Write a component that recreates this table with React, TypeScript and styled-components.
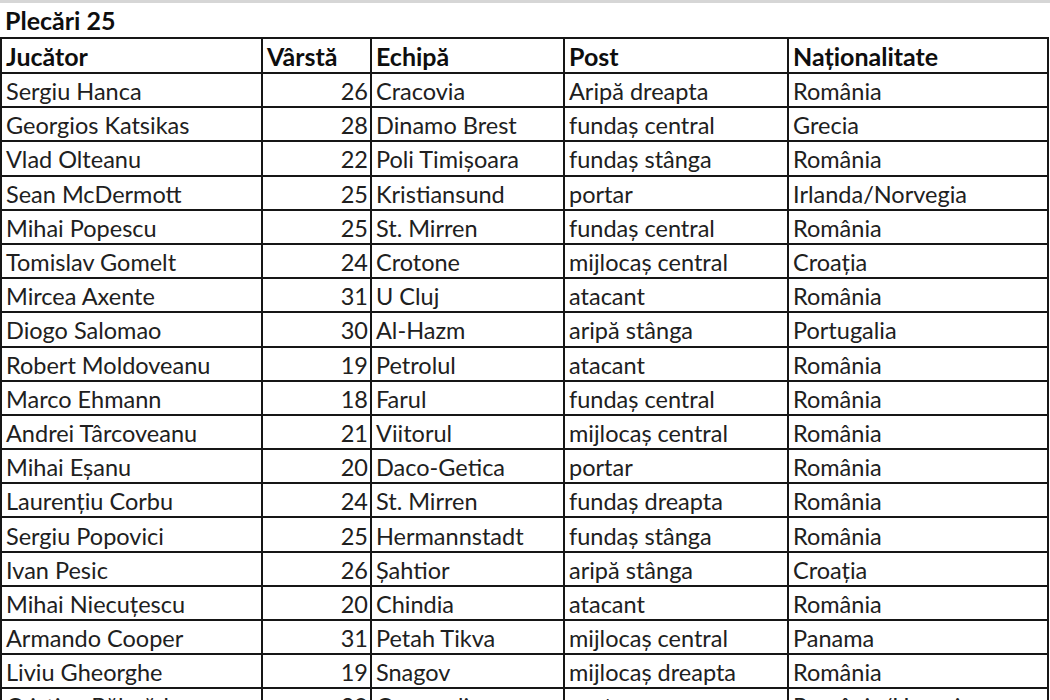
import React from 'react';
import styled, { createGlobalStyle } from 'styled-components';

type Player = {
  name: string;
  age: number | '';
  team: string;
  post: string;
  nation: string;
};

const players: Player[] = [
  { name: 'Sergiu Hanca', age: 26, team: 'Cracovia', post: 'Aripă dreapta', nation: 'România' },
  { name: 'Georgios Katsikas', age: 28, team: 'Dinamo Brest', post: 'fundaș central', nation: 'Grecia' },
  { name: 'Vlad Olteanu', age: 22, team: 'Poli Timișoara', post: 'fundaș stânga', nation: 'România' },
  { name: 'Sean McDermott', age: 25, team: 'Kristiansund', post: 'portar', nation: 'Irlanda/Norvegia' },
  { name: 'Mihai Popescu', age: 25, team: 'St. Mirren', post: 'fundaș central', nation: 'România' },
  { name: 'Tomislav Gomelt', age: 24, team: 'Crotone', post: 'mijlocaș central', nation: 'Croația' },
  { name: 'Mircea Axente', age: 31, team: 'U Cluj', post: 'atacant', nation: 'România' },
  { name: 'Diogo Salomao', age: 30, team: 'Al-Hazm', post: 'aripă stânga', nation: 'Portugalia' },
  { name: 'Robert Moldoveanu', age: 19, team: 'Petrolul', post: 'atacant', nation: 'România' },
  { name: 'Marco Ehmann', age: 18, team: 'Farul', post: 'fundaș central', nation: 'România' },
  { name: 'Andrei Târcoveanu', age: 21, team: 'Viitorul', post: 'mijlocaș central', nation: 'România' },
  { name: 'Mihai Eșanu', age: 20, team: 'Daco-Getica', post: 'portar', nation: 'România' },
  { name: 'Laurențiu Corbu', age: 24, team: 'St. Mirren', post: 'fundaș dreapta', nation: 'România' },
  { name: 'Sergiu Popovici', age: 25, team: 'Hermannstadt', post: 'fundaș stânga', nation: 'România' },
  { name: 'Ivan Pesic', age: 26, team: 'Șahtior', post: 'aripă stânga', nation: 'Croația' },
  { name: 'Mihai Niecuțescu', age: 20, team: 'Chindia', post: 'atacant', nation: 'România' },
  { name: 'Armando Cooper', age: 31, team: 'Petah Tikva', post: 'mijlocaș central', nation: 'Panama' },
  { name: 'Liviu Gheorghe', age: 19, team: 'Snagov', post: 'mijlocaș dreapta', nation: 'România' },
  { name: 'Cristian Bălgrădean', age: 29, team: 'Concordia', post: 'portar', nation: 'România/Ungaria' },
];

const GlobalStyle = createGlobalStyle`
  html, body {
    margin: 0;
    padding: 0;
    background: #ffffff;
    overflow: hidden;
  }
`;

const Page = styled.div`
  width: 1050px;
  height: 700px;
  overflow: hidden;
  border-top: 3px solid #d6d6d6;
  box-sizing: border-box;
  font-family: Lato, 'Open Sans', sans-serif;
  color: #141414;
`;

const Title = styled.div`
  height: 34px;
  padding-left: 5px;
  display: flex;
  align-items: center;
  font-size: 25px;
  font-weight: 700;
  color: #0e0e0e;
`;

const Sheet = styled.table`
  width: 1047px;
  table-layout: fixed;
  border-collapse: collapse;
`;

const HeadCell = styled.th<{ $width: number }>`
  box-sizing: border-box;
  width: ${p => p.$width}px;
  height: 35px;
  padding: 1px 3px 0 4px;
  border: 2px solid #161616;
  text-align: left;
  font-size: 25px;
  font-weight: 700;
  color: #0e0e0e;
  white-space: nowrap;
  overflow: hidden;
`;

const Cell = styled.td<{ $align?: 'left' | 'right' }>`
  box-sizing: border-box;
  height: 34.2px;
  padding: 2px 2px 0 4px;
  border: 2px solid #161616;
  text-align: ${p => p.$align ?? 'left'};
  font-size: 23.5px;
  line-height: 28px;
  color: #202020;
  white-space: nowrap;
  overflow: hidden;
`;

export default function App() {
  return (
    <>
      <GlobalStyle />
      <Page>
        <Title>Plecări 25</Title>
        <Sheet>
          <thead>
            <tr>
              <HeadCell $width={261}>Jucător</HeadCell>
              <HeadCell $width={109}>Vârstă</HeadCell>
              <HeadCell $width={193}>Echipă</HeadCell>
              <HeadCell $width={224}>Post</HeadCell>
              <HeadCell $width={260}>Naționalitate</HeadCell>
            </tr>
          </thead>
          <tbody>
            {players.map(p => (
              <tr key={p.name}>
                <Cell>{p.name}</Cell>
                <Cell $align="right">{p.age}</Cell>
                <Cell>{p.team}</Cell>
                <Cell>{p.post}</Cell>
                <Cell>{p.nation}</Cell>
              </tr>
            ))}
          </tbody>
        </Sheet>
      </Page>
    </>
  );
}
